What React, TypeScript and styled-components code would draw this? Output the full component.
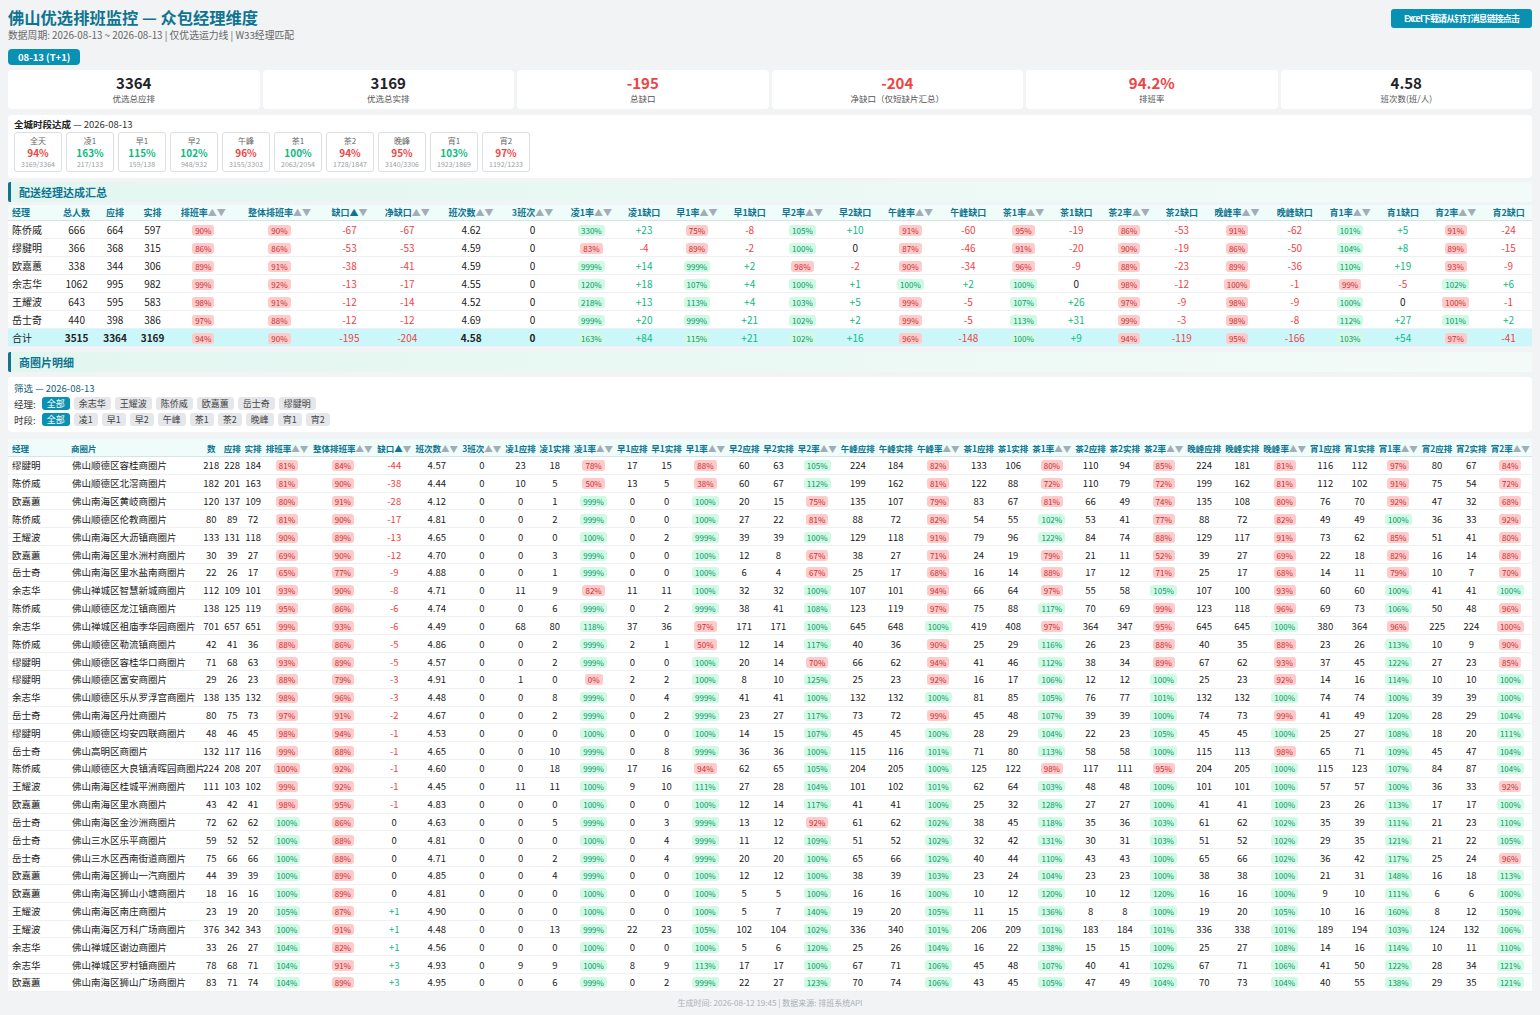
import React from 'react'
import styled, { createGlobalStyle } from 'styled-components'

const GlobalStyle = createGlobalStyle`
  body {
    margin: 0;
    background: #f1f3f5;
    font-family: 'Noto Sans CJK SC', 'Noto Sans', sans-serif;
    color: #222;
  }
`

const Page = styled.div`
  padding: 6px 8px 0;
`

const TopBar = styled.div`
  display: flex;
  justify-content: space-between;
  align-items: flex-start;
`

const Title = styled.h1`
  margin: 0;
  font-size: 16.3px;
  line-height: 22px;
  font-weight: 700;
  color: #0e7490;
`

const Subtitle = styled.div`
  font-size: 9.8px;
  line-height: 14px;
  color: #666;
`

const DateBadge = styled.div`
  display: inline-block;
  margin-top: 5px;
  height: 16px;
  line-height: 16px;
  padding: 0 10px;
  border-radius: 4px;
  background: #0891b2;
  color: #fff;
  font-size: 9.5px;
  font-weight: 700;
`

const ExcelButton = styled.div`
  margin-top: 3px;
  width: 141px;
  height: 19px;
  display: flex;
  align-items: center;
  justify-content: center;
  border-radius: 3px;
  background: #0891b2;
  color: #fff;
  font-size: 9px;
  font-weight: 700;
  letter-spacing: -0.9px;
  white-space: nowrap;
  overflow: hidden;
`

const KpiGrid = styled.div`
  margin-top: 4px;
  display: grid;
  grid-template-columns: repeat(6, 1fr);
  gap: 3px;
`

const KpiCard = styled.div`
  height: 39px;
  box-sizing: border-box;
  padding-top: 4px;
  background: #fff;
  border-radius: 4px;
  text-align: center;
`

const KpiValue = styled.div<{ $red?: boolean }>`
  font-size: 15px;
  line-height: 18px;
  font-weight: 700;
  color: ${p => (p.$red ? '#ef4444' : '#1f2328')};
`

const KpiLabel = styled.div`
  font-size: 8.5px;
  line-height: 12px;
  color: #555;
`

const Panel = styled.div`
  background: #fff;
  border-radius: 4px;
`

const SlotPanel = styled(Panel)`
  margin-top: 6px;
  padding: 3px 6px 6px;
`

const SlotTitle = styled.div`
  font-size: 9.5px;
  line-height: 13px;
  color: #333;
  b {
    color: #222;
  }
`

const SlotRow = styled.div`
  display: flex;
  gap: 4px;
  margin-top: 1px;
`

const SlotBox = styled.div`
  width: 48px;
  height: 40px;
  box-sizing: border-box;
  padding-top: 2px;
  border: 1px solid #dcdfe3;
  border-radius: 3px;
  text-align: center;
`

const SlotName = styled.div`
  font-size: 8px;
  line-height: 11px;
  color: #666;
`

const SlotPct = styled.div<{ $good: boolean }>`
  font-size: 10px;
  line-height: 13px;
  font-weight: 700;
  color: ${p => (p.$good ? '#10b981' : '#ef4444')};
`

const SlotFrac = styled.div`
  font-size: 7px;
  line-height: 10px;
  color: #9aa0a6;
`

const SectionHeader = styled.div<{ $top: number }>`
  margin-top: ${p => p.$top}px;
  height: 20px;
  line-height: 20px;
  padding-left: 8px;
  border-left: 3px solid #0e7490;
  border-radius: 2px;
  background: linear-gradient(90deg, #e2f6f0, #f3fbf8);
  font-size: 11px;
  font-weight: 700;
  color: #0e7490;
`

const TableCard = styled(Panel)<{ $top: number }>`
  margin-top: ${p => p.$top}px;
`

const Table = styled.table<{ $fs: number; $rowH: number; $headH: number }>`
  width: 100%;
  border-collapse: separate;
  border-spacing: 0;
  font-size: ${p => p.$fs}px;
  thead th {
    height: ${p => p.$headH}px;
  }
  tbody td {
    height: ${p => p.$rowH}px;
  }
`

const Th = styled.th<{ $left?: boolean; $fs: number }>`
  box-sizing: border-box;
  padding: 0 1px;
  background: #effcfa;
  border-bottom: 1px solid #d5e4e6;
  color: #0e7490;
  font-size: ${p => p.$fs}px;
  font-weight: 700;
  white-space: nowrap;
  text-align: ${p => (p.$left ? 'left' : 'center')};
  &:first-child {
    padding-left: 4px;
  }
`

const Td = styled.td<{ $left?: boolean; $bold?: boolean }>`
  box-sizing: border-box;
  padding: 0 2px;
  border-bottom: 1px solid #eef0f2;
  text-align: ${p => (p.$left ? 'left' : 'center')};
  font-weight: ${p => (p.$bold ? 700 : 400)};
  white-space: nowrap;
  &:first-child {
    padding-left: 4px;
  }
`

const Tr = styled.tr<{ $total?: boolean }>`
  background: ${p => (p.$total ? '#cbf7fb' : '#fff')};
`

const Arrows = styled.span`
  color: #a3adb6;
  font-weight: 400;
`

const Arrow = styled.span<{ $on?: boolean }>`
  color: ${p => (p.$on ? '#0e7490' : '#a3adb6')};
`

const Pill = styled.span<{ $good: boolean }>`
  display: inline-block;
  padding: 0 3px;
  border-radius: 3px;
  font-size: 8px;
  line-height: 11px;
  background: ${p => (p.$good ? '#d1fae5' : '#fecaca')};
  color: ${p => (p.$good ? '#079669' : '#c53030')};
`

const GapText = styled.span<{ $v: number }>`
  color: ${p => (p.$v > 0 ? '#10b981' : p.$v < 0 ? '#ef4444' : '#222')};
`

const NameBox = styled.div`
  width: 50px;
`

const AreaBox = styled.div`
  width: 120px;
  padding-left: 3px;
  overflow: visible;
  white-space: nowrap;
`

const ClipHead = styled.span`
  display: inline-block;
  width: 8.5px;
  overflow: hidden;
  direction: rtl;
  white-space: nowrap;
  vertical-align: bottom;
`

const FilterCard = styled(Panel)`
  margin-top: 5px;
  padding: 5px 6px 6px;
`

const FilterTitle = styled.div`
  font-size: 9.5px;
  line-height: 12px;
  color: #155e75;
`

const FilterRow = styled.div`
  display: flex;
  align-items: center;
  gap: 4px;
  margin-top: 3px;
  height: 13px;
`

const FilterLabel = styled.span`
  font-size: 9.5px;
  color: #333;
  margin-right: 2px;
`

const Chip = styled.span<{ $active?: boolean }>`
  font-size: 9px;
  line-height: 13px;
  padding: 0 5px;
  border-radius: 3px;
  background: ${p => (p.$active ? '#0891b2' : '#e5e7eb')};
  color: ${p => (p.$active ? '#fff' : '#444')};
`

const Footer = styled.div`
  margin-top: 5px;
  text-align: center;
  font-size: 8px;
  color: #aab0b6;
`

const SLOTS = ['凌1', '早1', '早2', '午峰', '茶1', '茶2', '晚峰', '宵1', '宵2']

const kpis = [
  { v: '3364', l: '优选总应排' },
  { v: '3169', l: '优选总实排' },
  { v: '-195', l: '总缺口', red: true },
  { v: '-204', l: '净缺口（仅短缺片汇总）', red: true },
  { v: '94.2%', l: '排班率', red: true },
  { v: '4.58', l: '班次数(班/人)' },
]

const citySlots = [
  { n: '全天', p: '94%', f: '3169/3364', g: false },
  { n: '凌1', p: '163%', f: '217/133', g: true },
  { n: '早1', p: '115%', f: '159/138', g: true },
  { n: '早2', p: '102%', f: '948/932', g: true },
  { n: '午峰', p: '96%', f: '3155/3303', g: false },
  { n: '茶1', p: '100%', f: '2063/2054', g: true },
  { n: '茶2', p: '94%', f: '1728/1847', g: false },
  { n: '晚峰', p: '95%', f: '3140/3306', g: false },
  { n: '宵1', p: '103%', f: '1923/1869', g: true },
  { n: '宵2', p: '97%', f: '1192/1233', g: false },
]

type MgrRow = {
  name: string
  total: number
  ya: number
  sh: number
  rate: string
  all: string
  gap: number
  net: number
  shifts: string
  s3: number
  slots: [string, number][]
}

const managers: MgrRow[] = [
  { name: '陈侨威', total: 666, ya: 664, sh: 597, rate: '90%', all: '90%', gap: -67, net: -67, shifts: '4.62', s3: 0,
    slots: [['330%', 23], ['75%', -8], ['105%', 10], ['91%', -60], ['95%', -19], ['86%', -53], ['91%', -62], ['101%', 5], ['91%', -24]] },
  { name: '缪腱明', total: 366, ya: 368, sh: 315, rate: '86%', all: '86%', gap: -53, net: -53, shifts: '4.59', s3: 0,
    slots: [['83%', -4], ['89%', -2], ['100%', 0], ['87%', -46], ['91%', -20], ['90%', -19], ['86%', -50], ['104%', 8], ['89%', -15]] },
  { name: '欧嘉蕙', total: 338, ya: 344, sh: 306, rate: '89%', all: '91%', gap: -38, net: -41, shifts: '4.59', s3: 0,
    slots: [['999%', 14], ['999%', 2], ['98%', -2], ['90%', -34], ['96%', -9], ['88%', -23], ['89%', -36], ['110%', 19], ['93%', -9]] },
  { name: '余志华', total: 1062, ya: 995, sh: 982, rate: '99%', all: '92%', gap: -13, net: -17, shifts: '4.55', s3: 0,
    slots: [['120%', 18], ['107%', 4], ['100%', 1], ['100%', 2], ['100%', 0], ['98%', -12], ['100%', -1], ['99%', -5], ['102%', 6]] },
  { name: '王耀波', total: 643, ya: 595, sh: 583, rate: '98%', all: '91%', gap: -12, net: -14, shifts: '4.52', s3: 0,
    slots: [['218%', 13], ['113%', 4], ['103%', 5], ['99%', -5], ['107%', 26], ['97%', -9], ['98%', -9], ['100%', 0], ['100%', -1]] },
  { name: '岳士奇', total: 440, ya: 398, sh: 386, rate: '97%', all: '88%', gap: -12, net: -12, shifts: '4.69', s3: 0,
    slots: [['999%', 20], ['999%', 21], ['102%', 2], ['99%', -5], ['113%', 31], ['99%', -3], ['98%', -8], ['112%', 27], ['101%', 2]] },
]

const mgrTotal: MgrRow = {
  name: '合计', total: 3515, ya: 3364, sh: 3169, rate: '94%', all: '90%', gap: -195, net: -204, shifts: '4.58', s3: 0,
  slots: [['163%', 84], ['115%', 21], ['102%', 16], ['96%', -148], ['100%', 9], ['94%', -119], ['95%', -166], ['103%', 54], ['97%', -41]],
}

type DetailRow = [string, string, number, number, number, string, ...number[]]

const detail: DetailRow[] = [
  ['缪腱明', '佛山顺德区容桂商圈片', 218, 228, 184, '4.57', 23, 18, 17, 15, 60, 63, 224, 184, 133, 106, 110, 94, 224, 181, 116, 112, 80, 67],
  ['陈侨威', '佛山顺德区北滘商圈片', 182, 201, 163, '4.44', 10, 5, 13, 5, 60, 67, 199, 162, 122, 88, 110, 79, 199, 162, 112, 102, 75, 54],
  ['欧嘉蕙', '佛山南海区黄岐商圈片', 120, 137, 109, '4.12', 0, 1, 0, 0, 20, 15, 135, 107, 83, 67, 66, 49, 135, 108, 76, 70, 47, 32],
  ['陈侨威', '佛山顺德区伦教商圈片', 80, 89, 72, '4.81', 0, 2, 0, 0, 27, 22, 88, 72, 54, 55, 53, 41, 88, 72, 49, 49, 36, 33],
  ['王耀波', '佛山南海区大沥镇商圈片', 133, 131, 118, '4.65', 0, 0, 0, 2, 39, 39, 129, 118, 79, 96, 84, 74, 129, 117, 73, 62, 51, 41],
  ['欧嘉蕙', '佛山南海区里水洲村商圈片', 30, 39, 27, '4.70', 0, 3, 0, 0, 12, 8, 38, 27, 24, 19, 21, 11, 39, 27, 22, 18, 16, 14],
  ['岳士奇', '佛山南海区里水盐南商圈片', 22, 26, 17, '4.88', 0, 1, 0, 0, 6, 4, 25, 17, 16, 14, 17, 12, 25, 17, 14, 11, 10, 7],
  ['余志华', '佛山禅城区智慧新城商圈片', 112, 109, 101, '4.71', 11, 9, 11, 11, 32, 32, 107, 101, 66, 64, 55, 58, 107, 100, 60, 60, 41, 41],
  ['陈侨威', '佛山顺德区龙江镇商圈片', 138, 125, 119, '4.74', 0, 6, 0, 2, 38, 41, 123, 119, 75, 88, 70, 69, 123, 118, 69, 73, 50, 48],
  ['余志华', '佛山禅城区祖庙季华园商圈片', 701, 657, 651, '4.49', 68, 80, 37, 36, 171, 171, 645, 648, 419, 408, 364, 347, 645, 645, 380, 364, 225, 224],
  ['陈侨威', '佛山顺德区勒流镇商圈片', 42, 41, 36, '4.86', 0, 2, 2, 1, 12, 14, 40, 36, 25, 29, 26, 23, 40, 35, 23, 26, 10, 9],
  ['缪腱明', '佛山顺德区容桂华口商圈片', 71, 68, 63, '4.57', 0, 2, 0, 0, 20, 14, 66, 62, 41, 46, 38, 34, 67, 62, 37, 45, 27, 23],
  ['缪腱明', '佛山顺德区富安商圈片', 29, 26, 23, '4.91', 1, 0, 2, 2, 8, 10, 25, 23, 16, 17, 12, 12, 25, 23, 14, 16, 10, 10],
  ['余志华', '佛山顺德区乐从罗浮宫商圈片', 138, 135, 132, '4.48', 0, 8, 0, 4, 41, 41, 132, 132, 81, 85, 76, 77, 132, 132, 74, 74, 39, 39],
  ['岳士奇', '佛山南海区丹灶商圈片', 80, 75, 73, '4.67', 0, 2, 0, 2, 23, 27, 73, 72, 45, 48, 39, 39, 74, 73, 41, 49, 28, 29],
  ['缪腱明', '佛山顺德区均安四联商圈片', 48, 46, 45, '4.53', 0, 0, 0, 0, 14, 15, 45, 45, 28, 29, 22, 23, 45, 45, 25, 27, 18, 20],
  ['岳士奇', '佛山高明区商圈片', 132, 117, 116, '4.65', 0, 10, 0, 8, 36, 36, 115, 116, 71, 80, 58, 58, 115, 113, 65, 71, 45, 47],
  ['陈侨威', '佛山顺德区大良镇清晖园商圈片', 224, 208, 207, '4.60', 0, 18, 17, 16, 62, 65, 204, 205, 125, 122, 117, 111, 204, 205, 115, 123, 84, 87],
  ['王耀波', '佛山南海区桂城平洲商圈片', 111, 103, 102, '4.45', 11, 11, 9, 10, 27, 28, 101, 102, 62, 64, 48, 48, 101, 101, 57, 57, 36, 33],
  ['欧嘉蕙', '佛山南海区里水商圈片', 43, 42, 41, '4.83', 0, 0, 0, 0, 12, 14, 41, 41, 25, 32, 27, 27, 41, 41, 23, 26, 17, 17],
  ['岳士奇', '佛山南海区金沙洲商圈片', 72, 62, 62, '4.63', 0, 5, 0, 3, 13, 12, 61, 62, 38, 45, 35, 36, 61, 62, 35, 39, 21, 23],
  ['岳士奇', '佛山三水区乐平商圈片', 59, 52, 52, '4.81', 0, 0, 0, 4, 11, 12, 51, 52, 32, 42, 30, 31, 51, 52, 29, 35, 21, 22],
  ['岳士奇', '佛山三水区西南街道商圈片', 75, 66, 66, '4.71', 0, 2, 0, 4, 20, 20, 65, 66, 40, 44, 43, 43, 65, 66, 36, 42, 25, 24],
  ['欧嘉蕙', '佛山南海区狮山一汽商圈片', 44, 39, 39, '4.85', 0, 4, 0, 0, 12, 12, 38, 39, 23, 24, 23, 23, 38, 38, 21, 31, 16, 18],
  ['欧嘉蕙', '佛山南海区狮山小塘商圈片', 18, 16, 16, '4.81', 0, 0, 0, 0, 5, 5, 16, 16, 10, 12, 10, 12, 16, 16, 9, 10, 6, 6],
  ['王耀波', '佛山南海区南庄商圈片', 23, 19, 20, '4.90', 0, 0, 0, 0, 5, 7, 19, 20, 11, 15, 8, 8, 19, 20, 10, 16, 8, 12],
  ['王耀波', '佛山南海区万科广场商圈片', 376, 342, 343, '4.48', 0, 13, 22, 23, 102, 104, 336, 340, 206, 209, 183, 184, 336, 338, 189, 194, 124, 132],
  ['余志华', '佛山禅城区谢边商圈片', 33, 26, 27, '4.56', 0, 0, 0, 0, 5, 6, 25, 26, 16, 22, 15, 15, 25, 27, 14, 16, 10, 11],
  ['余志华', '佛山禅城区罗村镇商圈片', 78, 68, 71, '4.93', 9, 9, 8, 9, 17, 17, 67, 71, 45, 48, 40, 41, 67, 71, 41, 50, 28, 34],
  ['欧嘉蕙', '佛山南海区狮山广场商圈片', 83, 71, 74, '4.95', 0, 6, 0, 2, 22, 27, 70, 74, 43, 45, 47, 49, 70, 73, 40, 55, 29, 35],
]

const rateOf = (ya: number, sh: number) =>
  ya === 0 ? (sh > 0 ? 999 : 100) : Math.round((sh / ya) * 100)

const fmtGap = (v: number) => (v > 0 ? `+${v}` : `${v}`)

const Sort = ({ active }: { active?: boolean }) => (
  <Arrows>
    <Arrow $on={active}>▲</Arrow>▼
  </Arrows>
)

const RatePill = ({ ya, sh }: { ya: number; sh: number }) => (
  <Pill $good={sh >= ya}>{rateOf(ya, sh)}%</Pill>
)

const ManagerRow = ({ row, total }: { row: MgrRow; total?: boolean }) => (
  <Tr $total={total}>
    <Td $left>{row.name}</Td>
    <Td $bold={total}>{row.total}</Td>
    <Td $bold={total}>{row.ya}</Td>
    <Td $bold={total}>{row.sh}</Td>
    <Td><Pill $good={false}>{row.rate}</Pill></Td>
    <Td><Pill $good={false}>{row.all}</Pill></Td>
    <Td><GapText $v={row.gap}>{fmtGap(row.gap)}</GapText></Td>
    <Td><GapText $v={row.net}>{fmtGap(row.net)}</GapText></Td>
    <Td $bold={total}>{row.shifts}</Td>
    <Td $bold={total}>{row.s3}</Td>
    {row.slots.map(([r, g], i) => (
      <React.Fragment key={i}>
        <Td><Pill $good={g >= 0}>{r}</Pill></Td>
        <Td><GapText $v={g}>{fmtGap(g)}</GapText></Td>
      </React.Fragment>
    ))}
  </Tr>
)

const ManagerTable = () => (
  <TableCard $top={3}>
    <Table $fs={10} $rowH={18} $headH={16}>
      <thead>
        <tr>
          <Th $fs={9} $left>经理</Th>
          <Th $fs={9}>总人数</Th>
          <Th $fs={9}>应排</Th>
          <Th $fs={9}>实排</Th>
          <Th $fs={9}>排班率<Sort /></Th>
          <Th $fs={9}>整体排班率<Sort /></Th>
          <Th $fs={9}>缺口<Sort active /></Th>
          <Th $fs={9}>净缺口<Sort /></Th>
          <Th $fs={9}>班次数<Sort /></Th>
          <Th $fs={9}>3班次<Sort /></Th>
          {SLOTS.map(s => (
            <React.Fragment key={s}>
              <Th $fs={9}>{s}率<Sort /></Th>
              <Th $fs={9}>{s}缺口</Th>
            </React.Fragment>
          ))}
        </tr>
      </thead>
      <tbody>
        {managers.map(m => (
          <ManagerRow key={m.name} row={m} />
        ))}
        <ManagerRow row={mgrTotal} total />
      </tbody>
    </Table>
  </TableCard>
)

const DetailTable = () => (
  <TableCard $top={7}>
    <Table $fs={9.5} $rowH={17.83} $headH={18}>
      <thead>
        <tr>
          <Th $fs={8.5} $left>经理</Th>
          <Th $fs={8.5} $left><AreaBox>商圈片</AreaBox></Th>
          <Th $fs={8.5}><ClipHead>总人数</ClipHead></Th>
          <Th $fs={8.5}>应排</Th>
          <Th $fs={8.5}>实排</Th>
          <Th $fs={8.5}>排班率<Sort /></Th>
          <Th $fs={8.5}>整体排班率<Sort /></Th>
          <Th $fs={8.5}>缺口<Sort active /></Th>
          <Th $fs={8.5}>班次数<Sort /></Th>
          <Th $fs={8.5}>3班次<Sort /></Th>
          {SLOTS.map(s => (
            <React.Fragment key={s}>
              <Th $fs={8.5}>{s}应排</Th>
              <Th $fs={8.5}>{s}实排</Th>
              <Th $fs={8.5}>{s}率<Sort /></Th>
            </React.Fragment>
          ))}
        </tr>
      </thead>
      <tbody>
        {detail.map(row => {
          const [mgr, area, total, ya, sh, shifts, ...slotNums] = row
          const gap = sh - ya
          return (
            <Tr key={area}>
              <Td $left><NameBox>{mgr}</NameBox></Td>
              <Td $left><AreaBox>{area}</AreaBox></Td>
              <Td>{total}</Td>
              <Td>{ya}</Td>
              <Td>{sh}</Td>
              <Td><RatePill ya={ya} sh={sh} /></Td>
              <Td><Pill $good={sh >= total}>{Math.round((sh / total) * 100)}%</Pill></Td>
              <Td><GapText $v={gap}>{fmtGap(gap)}</GapText></Td>
              <Td>{shifts}</Td>
              <Td>0</Td>
              {SLOTS.map((s, i) => {
                const a = slotNums[i * 2] as number
                const b = slotNums[i * 2 + 1] as number
                return (
                  <React.Fragment key={s}>
                    <Td>{a}</Td>
                    <Td>{b}</Td>
                    <Td><RatePill ya={a} sh={b} /></Td>
                  </React.Fragment>
                )
              })}
            </Tr>
          )
        })}
      </tbody>
    </Table>
  </TableCard>
)

const MANAGER_CHIPS = ['全部', '余志华', '王耀波', '陈侨威', '欧嘉蕙', '岳士奇', '缪腱明']

const App = () => (
  <Page>
    <GlobalStyle />
    <TopBar>
      <div>
        <Title>佛山优选排班监控 — 众包经理维度</Title>
        <Subtitle>数据周期: 2026-08-13 ~ 2026-08-13 | 仅优选运力线 | W33经理匹配</Subtitle>
        <DateBadge>08-13 (T+1)</DateBadge>
      </div>
      <ExcelButton>Excel下载请从钉钉消息链接点击</ExcelButton>
    </TopBar>

    <KpiGrid>
      {kpis.map(k => (
        <KpiCard key={k.l}>
          <KpiValue $red={k.red}>{k.v}</KpiValue>
          <KpiLabel>{k.l}</KpiLabel>
        </KpiCard>
      ))}
    </KpiGrid>

    <SlotPanel>
      <SlotTitle><b>全城时段达成</b> — 2026-08-13</SlotTitle>
      <SlotRow>
        {citySlots.map(s => (
          <SlotBox key={s.n}>
            <SlotName>{s.n}</SlotName>
            <SlotPct $good={s.g}>{s.p}</SlotPct>
            <SlotFrac>{s.f}</SlotFrac>
          </SlotBox>
        ))}
      </SlotRow>
    </SlotPanel>

    <SectionHeader $top={4}>配送经理达成汇总</SectionHeader>
    <ManagerTable />

    <SectionHeader $top={5}>商圈片明细</SectionHeader>
    <FilterCard>
      <FilterTitle>筛选 — 2026-08-13</FilterTitle>
      <FilterRow>
        <FilterLabel>经理:</FilterLabel>
        {MANAGER_CHIPS.map((c, i) => (
          <Chip key={c} $active={i === 0}>{c}</Chip>
        ))}
      </FilterRow>
      <FilterRow>
        <FilterLabel>时段:</FilterLabel>
        {['全部', ...SLOTS].map((c, i) => (
          <Chip key={c} $active={i === 0}>{c}</Chip>
        ))}
      </FilterRow>
    </FilterCard>

    <DetailTable />

    <Footer>生成时间: 2026-08-12 19:45 | 数据来源: 排班系统API</Footer>
  </Page>
)

export default App
